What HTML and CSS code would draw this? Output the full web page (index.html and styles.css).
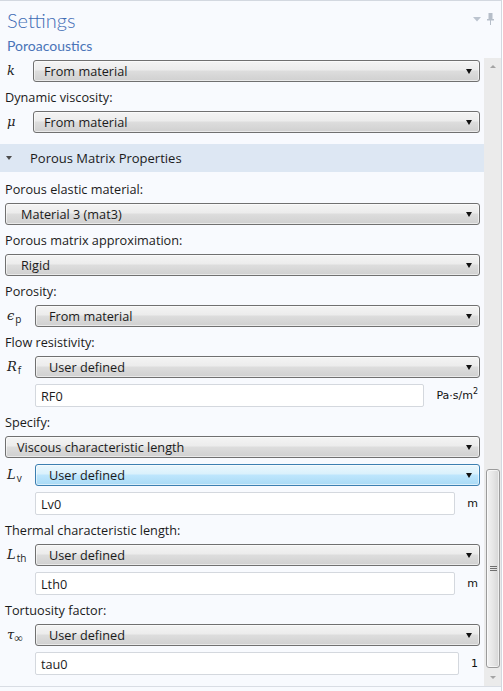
FILE: index.html
```html
<!DOCTYPE html>
<html>
<head>
<meta charset="utf-8">
<link rel="stylesheet" href="styles.css">
</head>
<body>
<div class="panel">
  <div class="head">
    <div class="title-row">
      <div class="title">Settings</div>
      <div class="head-icons">
        <svg class="ico-menu" width="8" height="5" viewBox="0 0 8 5"><path d="M0 0H8L4 4.5Z" fill="#bcc4cf"/></svg>
        <svg class="ico-pin" width="7" height="12" viewBox="0 0 7 12"><path d="M1.5 0H5.5V6H7V7.5H4V12H3V7.5H0V6H1.5Z" fill="#b6bec9"/></svg>
      </div>
    </div>
    <div class="subtitle">Poroacoustics</div>
  </div>
  <div class="main">
    <div class="content">
      <div class="row sym-row tight"><span class="sym"><i>k</i></span><div class="combo"><span>From material</span><span class="caret"></span></div></div>
      <div class="label">Dynamic viscosity:</div>
      <div class="row sym-row tight"><span class="sym"><i>μ</i></span><div class="combo"><span>From material</span><span class="caret"></span></div></div>

      <div class="section"><span class="sec-caret"></span><span class="sec-text">Porous Matrix Properties</span></div>

      <div class="label">Porous elastic material:</div>
      <div class="row"><div class="combo wide"><span>Material 3 (mat3)</span><span class="caret"></span></div></div>
      <div class="label">Porous matrix approximation:</div>
      <div class="row"><div class="combo wide"><span>Rigid</span><span class="caret"></span></div></div>
      <div class="label">Porosity:</div>
      <div class="row sym-row"><span class="sym"><i>ϵ</i><sub>p</sub></span><div class="combo"><span>From material</span><span class="caret"></span></div></div>
      <div class="label">Flow resistivity:</div>
      <div class="row sym-row"><span class="sym"><i>R</i><sub>f</sub></span><div class="combo"><span>User defined</span><span class="caret"></span></div></div>
      <div class="row sym-row"><span class="sym"></span><div class="field">RF0</div><span class="unit">Pa·s/m<sup>2</sup></span></div>
      <div class="label">Specify:</div>
      <div class="row"><div class="combo narrowpad"><span>Viscous characteristic length</span><span class="caret"></span></div></div>
      <div class="row sym-row"><span class="sym"><i>L</i><sub>v</sub></span><div class="combo active"><span>User defined</span><span class="caret"></span></div></div>
      <div class="row sym-row"><span class="sym"></span><div class="field">Lv0</div><span class="unit">m</span></div>
      <div class="label">Thermal characteristic length:</div>
      <div class="row sym-row"><span class="sym"><i>L</i><sub>th</sub></span><div class="combo"><span>User defined</span><span class="caret"></span></div></div>
      <div class="row sym-row"><span class="sym"></span><div class="field">Lth0</div><span class="unit">m</span></div>
      <div class="label">Tortuosity factor:</div>
      <div class="row sym-row"><span class="sym"><i>τ</i><sub class="inf">∞</sub></span><div class="combo"><span>User defined</span><span class="caret"></span></div></div>
      <div class="row sym-row"><span class="sym"></span><div class="field">tau0</div><span class="unit">1</span></div>
    </div>
    <div class="scrollbar">
      <div class="sb-btn"><span class="sb-up"></span></div>
      <div class="sb-track">
        <div class="sb-thumb"><span class="grip"></span><span class="grip"></span><span class="grip"></span></div>
      </div>
      <div class="sb-btn"><span class="sb-down"></span></div>
    </div>
  </div>
</div>
</body>
</html>
```
FILE: styles.css
```css
html, body {
  margin: 0;
  padding: 0;
  background: #ffffff;
}
body {
  font-family: "Open Sans", "Noto Sans", sans-serif;
  font-size: 12.7px;
  color: #1b1b1b;
}
.panel {
  width: 502px;
  height: 691px;
  box-sizing: border-box;
  border-top: 1px solid #d3d8e0;
  border-right: 1px solid #d3d8e0;
  background: #f8fafe;
  display: flex;
  flex-direction: column;
}
.head {
  height: 57px;
  box-sizing: border-box;
  padding: 6px 0 0 7px;
}
.title-row {
  display: flex;
  justify-content: space-between;
  align-items: flex-start;
}
.title {
  font-family: "Lato", sans-serif;
  font-size: 20px;
  font-weight: 300;
  line-height: 26px;
  color: #3f6cb5;
}
.head-icons {
  display: flex;
  align-items: flex-start;
  gap: 6px;
  padding: 6px 7px 0 0;
}
.ico-menu { margin-top: 4px; }
.subtitle {
  font-family: "Lato", sans-serif;
  font-size: 14px;
  line-height: 20px;
  margin-top: 3px;
  color: #4a74b8;
}
.main {
  height: 629px;
  box-sizing: border-box;
  border-bottom: 1px solid #d9dde4;
  display: flex;
}
.content {
  flex: 1;
  padding: 2px 4px 0 5px;
  overflow: hidden;
}
.row {
  display: flex;
  align-items: center;
}
.row + .row { margin-top: 6px; }
.sym {
  width: 30px;
  flex: none;
  font-family: "DejaVu Serif", "Liberation Serif", serif;
  font-size: 13px;
  line-height: 20px;
  padding-left: 2px;
  box-sizing: border-box;
  white-space: nowrap;
  color: #222;
}
.tight .sym { width: 28px; }
.sym sub {
  font-family: "Open Sans", sans-serif;
  font-size: 10px;
  vertical-align: -3px;
  line-height: 0;
  margin-left: 1px;
}
.sym sub.inf {
  font-family: "Liberation Serif", serif;
  font-size: 12px;
  margin-left: 0;
}
.label {
  padding: 7px 0 5px;
  line-height: 17px;
}
.combo {
  flex: 1;
  height: 22px;
  box-sizing: border-box;
  border: 1px solid #707070;
  border-radius: 3px;
  background: linear-gradient(#f4f4f4 0%, #ececec 45%, #dddddd 50%, #d0d0d0 100%);
  box-shadow: inset 0 0 0 1px rgba(255, 255, 255, 0.55);
  display: flex;
  align-items: center;
  justify-content: space-between;
  padding: 0 7px 0 13px;
  line-height: 18px;
}
.tight .combo { padding-left: 10px; }
.combo.wide { padding-left: 15px; }
.combo.narrowpad { padding-left: 11px; }
.combo.active {
  border-color: #3c7fb1;
  background: linear-gradient(#ebf7fd 0%, #daf1fc 45%, #bee6fd 50%, #a9daf5 100%);
}
.caret {
  width: 0;
  height: 0;
  border-left: 3.5px solid transparent;
  border-right: 3.5px solid transparent;
  border-top: 5px solid #111;
}
.field {
  flex: 1;
  height: 23px;
  box-sizing: border-box;
  border: 1px solid #d4d8de;
  border-radius: 2px;
  background: #ffffff;
  padding-left: 5px;
  display: flex;
  align-items: center;
}
.unit {
  font-family: "DejaVu Sans", sans-serif;
  font-size: 11px;
  margin-left: 12px;
  padding-right: 2px;
  color: #111;
}
.unit sup {
  font-size: 8px;
  vertical-align: 5px;
  line-height: 0;
}
.section {
  margin: 11px -4px 0 -5px;
  height: 28px;
  background: #dde7f3;
  display: flex;
  align-items: center;
  padding-left: 6px;
}
.sec-caret {
  width: 0;
  height: 0;
  border-left: 3px solid transparent;
  border-right: 3px solid transparent;
  border-top: 4px solid #4d4d4d;
  margin-right: 18px;
}
.sec-text {
  font-size: 13px;
}
.section + .label { padding-top: 9px; }
.scrollbar {
  width: 17px;
  flex: none;
  background: #ebebeb;
  display: flex;
  flex-direction: column;
}
.sb-btn {
  height: 17px;
  flex: none;
  display: flex;
  align-items: center;
  justify-content: center;
}
.sb-up, .sb-down {
  width: 0;
  height: 0;
  border-left: 3px solid transparent;
  border-right: 3px solid transparent;
}
.sb-up { border-bottom: 3px solid #a4a4a4; }
.sb-down { border-top: 3px solid #a4a4a4; }
.sb-track {
  flex: 1;
  display: flex;
  flex-direction: column;
  justify-content: flex-end;
  padding: 0 1px 1px 2px;
}
.sb-thumb {
  height: 199px;
  box-sizing: border-box;
  border: 1px solid #9b9b9b;
  border-radius: 3px;
  background: linear-gradient(to right, #f3f3f3 0%, #e6e6e6 50%, #d6d6d6 100%);
  box-shadow: inset 0 0 0 1px rgba(255, 255, 255, 0.6);
  display: flex;
  flex-direction: column;
  align-items: center;
  justify-content: center;
  gap: 1px;
}
.grip {
  width: 7px;
  height: 1px;
  background: #6f6f6f;
}
```
